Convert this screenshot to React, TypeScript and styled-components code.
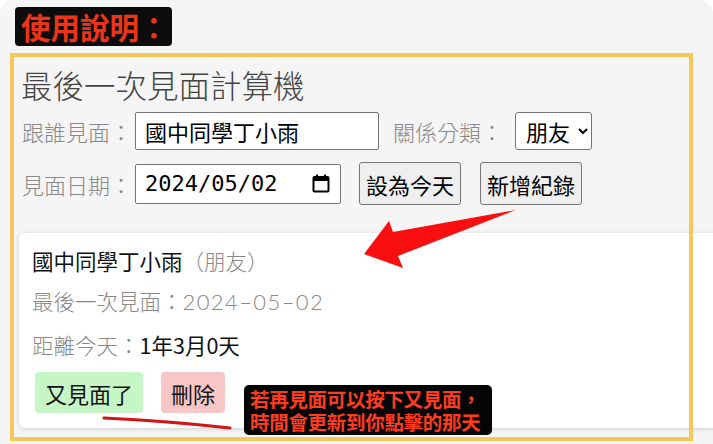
import React from "react";
import styled, { createGlobalStyle } from "styled-components";

const GlobalStyle = createGlobalStyle`
  html, body { margin: 0; padding: 0; background: #ffffff; }
  * { box-sizing: border-box; }
`;

const Page = styled.div`
  position: relative;
  width: 713px;
  height: 444px;
  overflow: hidden;
  background: #f5f5f5;
  border-radius: 14px 14px 0 0;
  font-family: "Noto Sans CJK TC", "Noto Sans", sans-serif;
`;

const Header = styled.div`
  padding: 7px 0 0 15px;
  display: flex;
`;

const Badge = styled.div`
  height: 39px;
  line-height: 39px;
  padding: 0 3px 0 6px;
  background: #0c0c0c;
  border-radius: 4px;
  color: #ec3418;
  font-size: 29.5px;
  font-weight: 700;
`;

const AppBody = styled.main`
  padding: 18px 0 0 19px;
`;

const Title = styled.h1`
  margin: 0 0 8px 2px;
  font-size: 31.5px;
  line-height: 40px;
  font-weight: 300;
  color: #444;
`;

const FormRow = styled.div<{ $mb: number }>`
  display: flex;
  align-items: center;
  padding-left: 3px;
  margin-bottom: ${(p) => p.$mb}px;
`;

const Label = styled.label<{ $ml?: number }>`
  font-size: 22px;
  font-weight: 300;
  color: #888;
  margin-left: ${(p) => p.$ml ?? 0}px;
  margin-right: 3px;
  white-space: nowrap;
`;

const TextInput = styled.input`
  width: 244px;
  height: 38px;
  border: 1px solid #767676;
  border-radius: 2px;
  padding: 0 9px;
  background: #fff;
  color: #000;
  font-family: "Noto Sans CJK TC", sans-serif;
  font-size: 22px;
  outline: none;
`;

const Select = styled.select`
  margin-left: 9px;
  width: 77px;
  height: 38px;
  border: 1px solid #767676;
  border-radius: 3px;
  background: #fff;
  color: #000;
  font-family: "Noto Sans CJK TC", sans-serif;
  font-size: 22px;
  padding: 0 2px 0 6px;
`;

const DateField = styled.div`
  display: flex;
  align-items: center;
  width: 206px;
  height: 40px;
  border: 1px solid #767676;
  border-radius: 2px;
  background: #fff;
  padding: 0 10px 0 9px;
`;

const DateText = styled.span`
  font-family: "DejaVu Sans Mono", monospace;
  font-size: 22px;
  color: #000;
`;

const CalendarIcon = styled.svg`
  margin-left: auto;
  width: 18px;
  height: 19px;
`;

const Button = styled.button<{ $ml: number }>`
  margin-left: ${(p) => p.$ml}px;
  height: 43px;
  padding: 0 6px;
  background: #efefef;
  border: 1px solid #767676;
  border-radius: 3px;
  color: #000;
  font-family: "Noto Sans CJK TC", sans-serif;
  font-size: 22px;
`;

const Card = styled.section`
  margin-top: 28px;
  width: 720px;
  background: #fff;
  border-radius: 6px;
  box-shadow: 0 1px 4px rgba(0, 0, 0, 0.16);
  padding: 13px 13px 15px;
`;

const CardTitle = styled.div`
  font-size: 21.5px;
  line-height: 30px;
  color: #111;
`;

const Muted = styled.span`
  color: #888;
  font-weight: 300;
`;

const CardLine = styled.div<{ $mt: number }>`
  margin-top: ${(p) => p.$mt}px;
  font-size: 21.5px;
  line-height: 30px;
  font-weight: 300;
  color: #888;
`;

const DateValue = styled.span`
  font-family: "Lato", "Noto Sans", sans-serif;
  font-weight: 300;
  font-size: 22px;
  letter-spacing: 1.4px;
`;

const Strong = styled.span`
  color: #111;
  font-weight: 400;
`;

const Actions = styled.div`
  margin-top: 12px;
  padding-left: 3px;
  display: flex;
  gap: 18px;
`;

const ActionButton = styled.button<{ $bg: string }>`
  height: 41px;
  padding: 0 10px;
  border: none;
  border-radius: 4px;
  background: ${(p) => p.$bg};
  color: #111;
  font-family: "Noto Sans CJK TC", sans-serif;
  font-size: 22px;
`;

const Frame = styled.div`
  position: absolute;
  left: 10px;
  top: 53px;
  width: 683px;
  height: 388px;
  border: 4px solid #f6c75a;
  pointer-events: none;
`;

const Note = styled.div`
  position: absolute;
  left: 244px;
  top: 385px;
  width: 248px;
  height: 50px;
  padding: 2px 0 0 6px;
  background: #050505;
  border-radius: 5px;
  color: #ff3b1f;
  font-size: 19.5px;
  font-weight: 700;
  line-height: 23px;
  white-space: nowrap;
  letter-spacing: -0.3px;
`;

const Overlay = styled.svg`
  position: absolute;
  left: 0;
  top: 0;
  pointer-events: none;
`;

export default function App() {
  return (
    <>
      <GlobalStyle />
      <Page>
        <Header>
          <Badge>使用說明：</Badge>
        </Header>
        <AppBody>
          <Title>最後一次見面計算機</Title>
          <FormRow $mb={12}>
            <Label>跟誰見面：</Label>
            <TextInput defaultValue="國中同學丁小雨" />
            <Label $ml={14}>關係分類：</Label>
            <Select defaultValue="朋友">
              <option>朋友</option>
              <option>家人</option>
              <option>同事</option>
            </Select>
          </FormRow>
          <FormRow $mb={0}>
            <Label>見面日期：</Label>
            <DateField>
              <DateText>2024/05/02</DateText>
              <CalendarIcon viewBox="0 0 18 19">
                <rect x="1.5" y="3" width="15" height="14.5" rx="1" fill="none" stroke="#000" strokeWidth="2" />
                <rect x="1.5" y="3" width="15" height="4" fill="#000" />
                <rect x="4" y="0.5" width="2" height="4" fill="#000" />
                <rect x="12" y="0.5" width="2" height="4" fill="#000" />
              </CalendarIcon>
            </DateField>
            <Button $ml={18}>設為今天</Button>
            <Button $ml={19}>新增紀錄</Button>
          </FormRow>
          <Card>
            <CardTitle>
              國中同學丁小雨<Muted>（朋友）</Muted>
            </CardTitle>
            <CardLine $mt={10}>
              最後一次見面：<DateValue>2024–05–02</DateValue>
            </CardLine>
            <CardLine $mt={13}>
              距離今天：<Strong>1年3月0天</Strong>
            </CardLine>
            <Actions>
              <ActionButton $bg="#c6f6c6">又見面了</ActionButton>
              <ActionButton $bg="#f8c6c6">刪除</ActionButton>
            </Actions>
          </Card>
        </AppBody>
        <Frame />
        <Overlay width="713" height="444" viewBox="0 0 713 444">
          <polygon
            points="516,210 393,232 389,221 364,254 403,268 398,256"
            fill="#f90f0f"
          />
          <path d="M104 418 Q168 421 230 428" fill="none" stroke="#d01515" strokeWidth="3" strokeLinecap="round" />
        </Overlay>
        <Note>
          若再見面可以按下又見面，
          <br />
          時間會更新到你點擊的那天
        </Note>
      </Page>
    </>
  );
}
